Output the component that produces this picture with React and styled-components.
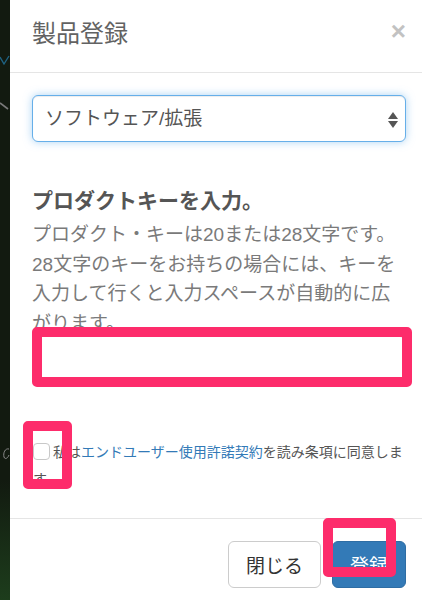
import React from "react";
import styled, { createGlobalStyle } from "styled-components";

const GlobalStyle = createGlobalStyle`
  html, body {
    margin: 0;
    padding: 0;
    background: #121a10;
    overflow: hidden;
  }
  body {
    font-family: "Liberation Sans", "Noto Sans CJK JP", sans-serif;
  }
  * {
    box-sizing: border-box;
  }
`;

const Page = styled.div`
  display: flex;
  height: 600px;
  overflow: hidden;
`;

const Backdrop = styled.div`
  width: 10px;
  flex-shrink: 0;
  background: #121a10;
  svg {
    display: block;
  }
`;

const Modal = styled.div`
  flex: 1;
  background: #fff;
  display: flex;
  flex-direction: column;
`;

const Header = styled.div`
  display: flex;
  align-items: center;
  justify-content: space-between;
  padding: 17px 16px 21px 22px;
  border-bottom: 1px solid #e5e5e5;
`;

const Title = styled.h4`
  margin: 0;
  font-size: 24px;
  line-height: 34px;
  font-weight: 400;
  color: #626262;
`;

const Close = styled.button`
  border: 0;
  background: none;
  padding: 0;
  margin-top: -6px;
  font-family: "Liberation Sans", sans-serif;
  font-size: 26px;
  font-weight: 700;
  line-height: 1;
  color: #c2c2c2;
  cursor: pointer;
`;

const Body = styled.div`
  padding: 22px 16px 25px 22px;
`;

const SelectWrap = styled.div`
  position: relative;
  svg {
    position: absolute;
    right: 7px;
    top: 16px;
    pointer-events: none;
  }
`;

const Select = styled.select`
  appearance: none;
  -webkit-appearance: none;
  width: 100%;
  height: 47px;
  padding: 0 36px 0 12px;
  border: 1px solid #66afe9;
  border-radius: 6px;
  background: #fff;
  box-shadow: inset 0 1px 1px rgba(0, 0, 0, 0.075),
    0 0 8px rgba(102, 175, 233, 0.55);
  font-family: inherit;
  font-size: 19px;
  color: #555;
  outline: none;
`;

const Heading = styled.h4`
  margin: 44px 0 0;
  font-size: 21px;
  line-height: 30px;
  font-weight: 700;
  color: #555;
`;

const Help = styled.p`
  margin: 4px 0 0;
  font-size: 19px;
  line-height: 29.5px;
  color: #7a7a7a;
`;

const Field = styled.div`
  position: relative;
  margin-top: -2px;
`;

const Input = styled.input`
  display: block;
  width: 100%;
  height: 47px;
  border: 1px solid #ccc;
  border-radius: 6px;
  padding: 0 12px;
  font-size: 19px;
  outline: none;
`;

const Mark = styled.span`
  position: absolute;
  top: ${(p) => p.$top}px;
  left: ${(p) => p.$left}px;
  width: ${(p) => p.$width}px;
  height: ${(p) => p.$height}px;
  border: 10px solid #fd2c6b;
  border-radius: 5px;
  pointer-events: none;
`;

const Agree = styled.label`
  position: relative;
  display: block;
  margin-top: 56px;
  padding-left: 1px;
  font-size: 14px;
  line-height: 27px;
  color: #555;
`;

const Check = styled.input`
  appearance: none;
  -webkit-appearance: none;
  display: inline-block;
  width: 17px;
  height: 17px;
  margin: 0 3px 0 0;
  vertical-align: -3px;
  border: 1px solid #c8c8c8;
  border-radius: 4px;
  background: #fff;
`;

const Link = styled.a`
  color: #337ab7;
  text-decoration: none;
`;

const Footer = styled.div`
  display: flex;
  justify-content: flex-end;
  gap: 11px;
  padding: 22px 16px 20px 22px;
  border-top: 1px solid #e5e5e5;
`;

const Button = styled.button`
  position: relative;
  height: 47px;
  padding: 0 17px;
  border-radius: 6px;
  border: 1px solid ${(p) => (p.$primary ? "#2e6da4" : "#ccc")};
  background: ${(p) => (p.$primary ? "#337ab7" : "#fff")};
  color: ${(p) => (p.$primary ? "#fff" : "#333")};
  font-family: inherit;
  font-size: 19px;
  cursor: pointer;
`;

const BackdropArt = () => (
  <svg width="10" height="600" viewBox="0 0 10 600">
    <defs>
      <linearGradient id="bd" x1="0" y1="0" x2="0" y2="1">
        <stop offset="0" stopColor="#121a10" />
        <stop offset="1" stopColor="#1d3d1c" />
      </linearGradient>
    </defs>
    <rect x="0" y="480" width="10" height="120" fill="url(#bd)" />
    <polyline points="0,57 4,64 9,56" fill="none" stroke="#1f6384" strokeWidth="1.4" />
    <line x1="0" y1="103" x2="8" y2="109" stroke="#7a7a7a" strokeWidth="1.6" />
    <path d="M9,449 C5,448 3,453 4,457 C5,460 8,458 9,455" fill="none" stroke="#8a8a8a" strokeWidth="1" />
  </svg>
);

const Arrows = () => (
  <svg width="12" height="18" viewBox="0 0 12 18">
    <path d="M6 1 L11 8 L1 8 Z" fill="#555" />
    <path d="M6 17 L11 10 L1 10 Z" fill="#555" />
  </svg>
);

export default function App() {
  return (
    <>
      <GlobalStyle />
      <Page>
        <Backdrop>
          <BackdropArt />
        </Backdrop>
        <Modal>
          <Header>
            <Title>製品登録</Title>
            <Close aria-label="close">×</Close>
          </Header>
          <Body>
            <SelectWrap>
              <Select defaultValue="ext">
                <option value="ext">ソフトウェア/拡張</option>
              </Select>
              <Arrows />
            </SelectWrap>
            <Heading>プロダクトキーを入力。</Heading>
            <Help>
              プロダクト・キーは20または28文字です。28文字のキーをお持ちの場合には、キーを入力して行くと入力スペースが自動的に広がります。
            </Help>
            <Field>
              <Input type="text" />
              <Mark $top={-9} $left={0} $width={380} $height={60} />
            </Field>
            <Agree>
              <Check type="checkbox" />
              私は<Link href="#">エンドユーザー使用許諾契約</Link>
              を読み条項に同意します
              <Mark $top={-18} $left={-9} $width={49} $height={68} />
            </Agree>
          </Body>
          <Footer>
            <Button>閉じる</Button>
            <Button $primary>
              登録
              <Mark $top={-24} $left={-10} $width={73} $height={59} />
            </Button>
          </Footer>
        </Modal>
      </Page>
    </>
  );
}
